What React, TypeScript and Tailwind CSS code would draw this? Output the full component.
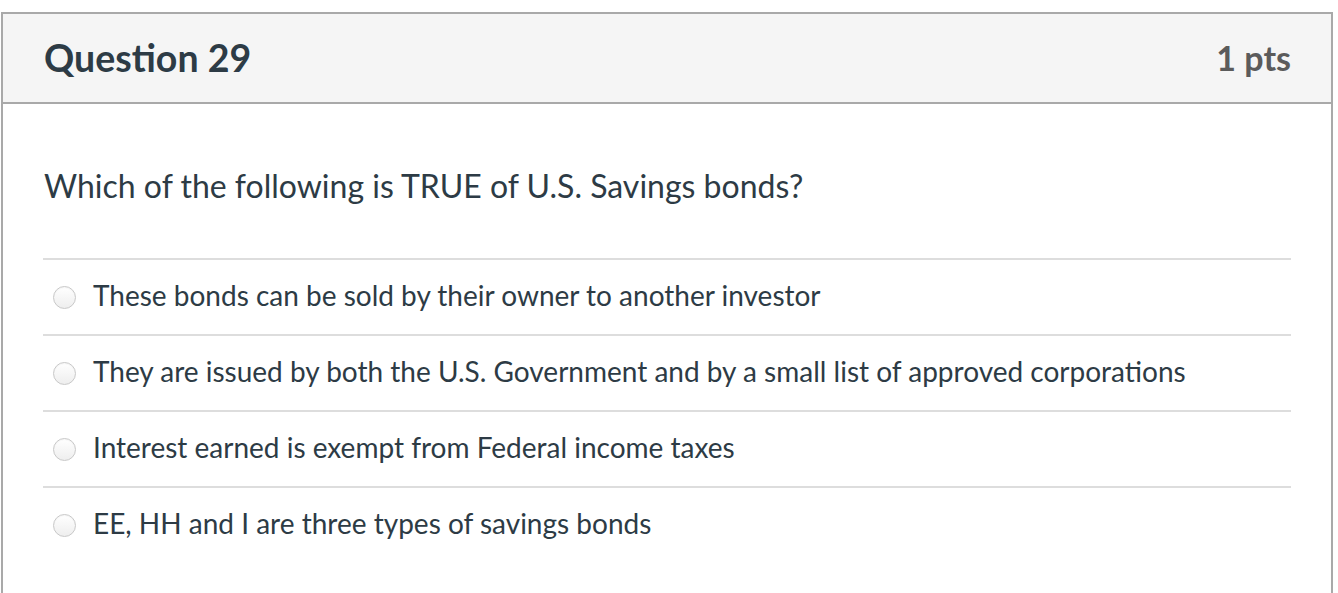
const answers = [
  'These bonds can be sold by their owner to another investor',
  'They are issued by both the U.S. Government and by a small list of approved corporations',
  'Interest earned is exempt from Federal income taxes',
  'EE, HH and I are three types of savings bonds',
]

const Radio = () => (
  <span className="block w-[23px] h-[23px] shrink-0 rounded-full border border-[#c8c8c8] bg-gradient-to-b from-white to-[#eeeeee] shadow-[inset_0_1px_1px_rgba(0,0,0,0.04)]" />
)

export default function App() {
  return (
    <div className="min-h-screen bg-white pt-[12px] pl-[1px] font-['Lato','Noto_Sans',sans-serif] text-[#2d3b45]">
      <div className="w-[1332px] h-[600px] border-2 border-[#a9a9a9] border-b-0">
        <div className="h-[90px] bg-[#f5f5f5] border-b-2 border-[#a9a9a9] flex items-center justify-between pl-[41px] pr-[40px]">
          <h2 className="text-[37.5px] font-bold leading-none">Question 29</h2>
          <span className="text-[34px] font-bold leading-none text-[#5b5b5b]">1 pts</span>
        </div>
        <div className="px-[40px]">
          <p className="text-[32px] leading-none pt-[66px] pb-[56px] pl-[1px]">
            Which of the following is TRUE of U.S. Savings bonds?
          </p>
          {answers.map((a) => (
            <label key={a} className="flex items-center h-[76px] border-t-2 border-[#dddddd] pl-[10px] gap-[17px] cursor-pointer">
              <Radio />
              <span className="text-[28px] leading-none pb-[5px]">{a}</span>
            </label>
          ))}
        </div>
      </div>
    </div>
  )
}
